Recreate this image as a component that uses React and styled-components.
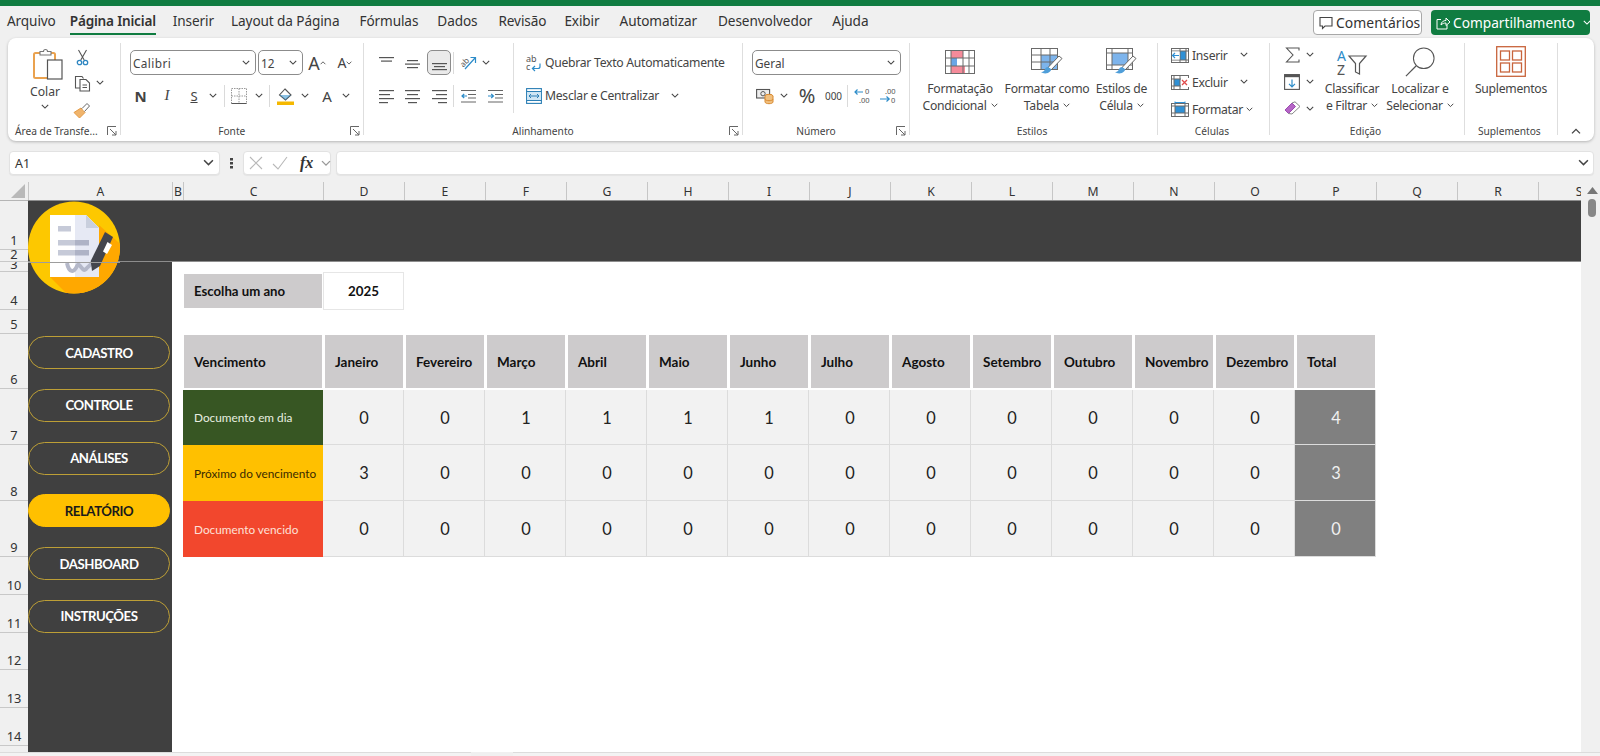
import React from "react";
import styled, { createGlobalStyle } from "styled-components";

const UI = `"Noto Sans", "Open Sans", sans-serif`;
const CELL = `Lato, "Open Sans", sans-serif`;
const COLUMNS = "144px 11px 140px repeat(13, 81px) 81px 81px 81px";

const Global = createGlobalStyle`
  html, body { margin: 0; padding: 0; background: #f0f0f0; overflow: hidden; }
  body { width: 1600px; height: 756px; font-family: ${UI}; color: #333; }
  * { box-sizing: border-box; }
  svg { overflow: visible; }
`;

const Page = styled.div`display: flex; flex-direction: column; width: 1600px; height: 756px; overflow: hidden;`;
const TitleStripe = styled.div`height: 6px; background: #107c41; flex: none;`;

const TabBar = styled.div`display: flex; align-items: stretch; height: 32px; padding: 0 10px 0 7px; flex: none;`;
const Tab = styled.div`
  display: flex; align-items: center; margin-right: ${p => p.$mr}px; padding-top: 2px; height: 29px;
  font-size: 13.6px; letter-spacing: ${p => (p.$active ? "-0.2px" : "-0.1px")}; color: #333; white-space: nowrap;
  font-weight: ${p => (p.$active ? 600 : 400)};
  border-bottom: 2px solid ${p => (p.$active ? "#107c41" : "transparent")};
`;
const TabActions = styled.div`display: flex; gap: 9px; margin-left: auto; padding-top: 4px;`;
const CommentButton = styled.div`
  display: flex; align-items: center; gap: 2px; width: 109px; height: 25px; padding-left: 5px;
  background: #fff; border: 1px solid #a8a8a8; border-radius: 4px; font-size: 13.9px; letter-spacing: .05px; color: #333;
`;
const ShareButton = styled.div`
  display: flex; align-items: center; gap: 2px; width: 159px; height: 25px; padding-left: 5px;
  background: #107c41; border-radius: 4px; font-size: 13.7px; color: #fff; white-space: nowrap;
`;
const ShareChev = styled.span`display: flex; margin-left: 6px;`;

const Ribbon = styled.div`
  display: flex; align-items: flex-start; height: 103px; width: 1586px; margin-left: 8px; padding-top: 5px; flex: none;
  background: #fff; border-radius: 8px; box-shadow: 0 1px 3px rgba(0,0,0,.25);
`;
const Group = styled.div`
  display: grid; grid-template-rows: 76px 16px; width: ${p => p.$w}px; height: 92px; flex: none;
  border-right: ${p => (p.$last ? "none" : "1px solid #dedede")};
`;
const GroupBody = styled.div`display: flex; min-width: 0;`;
const GroupFooter = styled.div`
  display: grid; grid-template-columns: 1fr auto 1fr; align-items: center; align-self: end; height: 16px; margin-bottom: -4px;
  padding: 0 3px 0 0;
  font-size: 10.2px; color: #444; white-space: nowrap;
`;
const ClipFooter = styled(GroupFooter)`grid-template-columns: auto 1fr; padding-left: 7px;`;
const FooterLabel = styled.span`grid-column: 2; padding-right: ${p => p.$shift ?? 0}px;`;
const FooterEnd = styled.span`grid-column: ${p => p.$col ?? 3}; justify-self: end; display: flex;`;

const Stack = styled.div`
  display: flex; flex-direction: column; gap: ${p => p.$gap ?? 8}px; padding: ${p => p.$pt ?? 7}px 0 0 ${p => p.$pl ?? 0}px;
  width: ${p => (p.$w ? `${p.$w}px` : "auto")}; margin-top: ${p => p.$mt ?? 0}px; flex: none;
  border-right: ${p => (p.$divided ? "1px solid #dedede" : "none")};
  height: ${p => (p.$divided ? "70px" : "auto")};
`;
const Row = styled.div`display: flex; align-items: center; height: ${p => p.$h ?? 25}px; flex: none;`;
const Slot = styled.div`
  display: flex; align-items: center; justify-content: center; width: ${p => p.$w}px; height: ${p => p.$h ?? 24}px; flex: none;
  margin-left: ${p => p.$ml ?? 0}px; color: #444; font-size: ${p => p.$size ?? 13}px;
`;
const VSep = styled.div`width: 1px; height: 22px; background: #dadada; margin: 0 ${p => p.$m ?? 1}px; flex: none;`;
const SelectBox = styled.div`
  display: flex; align-items: center; justify-content: space-between; width: ${p => p.$w}px; height: 25px; margin-left: ${p => p.$ml ?? 0}px; padding: 0 5px 0 2px;
  border: 1px solid #8c8c8c; border-radius: 5px; background: #fff; font-size: 11.8px; letter-spacing: ${p => p.$ls ?? 0}px; color: #444; flex: none;
`;
const FontLetter = styled.span`
  font-size: ${p => p.$size}px; font-weight: ${p => p.$weight ?? 400}; font-style: ${p => p.$italic ? "italic" : "normal"};
  font-family: ${p => p.$serif ? `"Liberation Serif", serif` : UI};
  text-decoration: ${p => p.$under ? "underline" : "none"}; color: #444;
`;
const ActiveAlign = styled.div`
  display: flex; align-items: center; justify-content: center; width: 24px; height: 25px; margin: 0 1px;
  background: #eaeaea; border: 1px solid #8c8c8c; border-radius: 5px; flex: none;
`;
const Label = styled.span`font-size: 12.2px; color: #444; white-space: nowrap; letter-spacing: -0.28px;`;

const PasteButton = styled.div`display: flex; flex-direction: column; align-items: center; width: 56px; margin-left: 9px; padding-top: 4px; flex: none;`;
const PasteGlyph = styled.div`display: flex; margin-left: 5px;`;
const PasteText = styled.div`font-size: 12.2px; color: #444; line-height: 16px; margin-top: 4px;`;

const BigButton = styled.div`
  display: flex; flex-direction: column; align-items: center; width: ${p => p.$w}px; margin-left: ${p => p.$ml ?? 0}px; flex: none;
`;
const BigIcon = styled.div`display: flex; align-items: center; justify-content: center; height: 37px; width: 100%;`;
const BigLine = styled.div`
  display: flex; align-items: center; justify-content: center; gap: 4px; height: 17px;
  font-size: 12.2px; color: #444; white-space: nowrap; letter-spacing: -0.28px;
`;
const CommandRow = styled.div`display: flex; align-items: center; height: 26px; margin-top: 1px; flex: none;`;
const CommandIcon = styled.div`display: flex; align-items: center; width: 21px; flex: none;`;
const CollapseSlot = styled.div`display: flex; justify-content: center; grid-row: 2; align-self: end; margin-bottom: -4px; height: 16px; align-items: center;`;

const FormulaBar = styled.div`display: flex; align-items: center; height: 24px; margin: 10px 0 7px; padding-left: 9px; flex: none;`;
const Field = styled.div`
  display: flex; align-items: center; width: ${p => p.$w}px; height: 24px; flex: none; margin-left: ${p => p.$ml ?? 0}px;
  background: #fff; border: 1px solid #e2e2e2; border-radius: 4px; box-shadow: 0 1px 1px rgba(0,0,0,.05);
  padding: ${p => p.$pad ?? "0 5px"}; justify-content: ${p => p.$justify ?? "flex-start"}; gap: ${p => p.$gap ?? 0}px; font-size: 12.4px; color: #333;
`;
const Kebab = styled.div`display: flex; justify-content: center; width: 23px; flex: none;`;
const FxMark = styled.span`font-family: "Liberation Serif", serif; font-style: italic; font-weight: 700; font-size: 16px; color: #333; margin-left: 4px;`;

const GridZone = styled.div`display: flex; height: 570px; flex: none;`;
const GridMain = styled.div`width: 1581px; flex: none; overflow: hidden;`;
const HeadRow = styled.div`display: flex; height: 19px;`;
const Corner = styled.div`display: flex; align-items: center; justify-content: flex-end; width: 28px; padding-right: 3px; flex: none; border-bottom: 1px solid #b5b5b5;`;
const ColHeads = styled.div`display: grid; grid-template-columns: ${COLUMNS}; border-bottom: 1px solid #8e8e8e; flex: 1; min-width: 0;`;
const ColHead = styled.div`
  display: flex; align-items: center; justify-content: center; height: 18px;
  font-size: 12.2px; color: #333; border-left: 1px solid #c6c6c6;
`;
const SheetBody = styled.div`display: flex; height: 551px;`;
const RowHeads = styled.div`display: flex; flex-direction: column; width: 28px; flex: none;`;
const RowHead = styled.div`
  display: flex; align-items: flex-end; justify-content: center; height: ${p => p.$h}px; flex: none; overflow: hidden;
  padding-bottom: ${p => (p.$h > 20 ? 2 : 0)}px;
  font-size: 12.8px; line-height: 14px; color: #333; border-bottom: 1px solid #c8c8c8;
`;
const Canvas = styled.div`
  position: relative; display: grid; flex: 1; min-width: 0; background: #fff;
  grid-template-columns: ${COLUMNS};
  grid-template-rows: 49px 12px 10px 38px 24px 55px 56px 56px 56px 1fr;
  font-family: ${CELL};
`;
const Band = styled.div`grid-column: 1 / -1; grid-row: 1 / 3; background: #404040; border-bottom: 1px solid #8d8d8d;`;
const LogoWrap = styled.div`position: absolute; left: 0; top: 0; width: 92px; height: 93px; z-index: 2;`;
const SideBar = styled.div`
  grid-column: 1; grid-row: 3 / -1; display: flex; flex-direction: column; gap: 19.8px; padding: 74px 2px 0 0;
  background: #404040;
`;
const Pill = styled.div`
  display: flex; align-items: center; justify-content: center; height: 33px; border-radius: 17px;
  border: 1.5px solid ${p => (p.$active ? "#ffc000" : "#bd9f36")};
  background: ${p => (p.$active ? "#ffc000" : "#404040")};
  color: ${p => (p.$active ? "#1a1a1a" : "#fff")};
  font-size: 13.2px; font-weight: 700; letter-spacing: -0.45px;
`;
const YearLabel = styled.div`
  grid-column: 3; grid-row: 4; display: flex; align-items: center; margin: 2px 1px 2px 1px; padding-left: 10px;
  background: #cdcbcc; font-weight: 700; font-size: 13.2px; color: #111;
`;
const YearValue = styled.div`
  grid-column: 4; grid-row: 4; display: flex; align-items: center; justify-content: center;
  border: 1px solid #e6e6e6; font-weight: 700; font-size: 13.4px; color: #111;
`;
const HeadCell = styled.div`
  grid-column: ${p => p.$col}; grid-row: 6;
  display: flex; align-items: center; margin: 1px 1px 1px ${p => p.$ml ?? 2}px; padding-left: 10px;
  background: #cdcbcc; font-weight: 700; font-size: 13.5px; color: #111; white-space: nowrap;
`;
const StatusCell = styled.div`
  grid-column: 3; grid-row: ${p => p.$row};
  display: flex; align-items: center; padding-left: 11px; margin-top: ${p => p.$first ? 1 : 0}px;
  background: ${p => p.$bg}; color: ${p => p.$fg}; font-size: 11.8px; white-space: nowrap;
`;
const ValueCell = styled.div`
  grid-column: ${p => p.$col}; grid-row: ${p => p.$row};
  display: flex; align-items: center; justify-content: center; padding-left: 2px; margin-top: ${p => p.$first ? 1 : 0}px;
  background: ${p => (p.$total ? "#808080" : "#f2f2f2")};
  color: ${p => (p.$total ? "#f0f0f0" : "#222")};
  border-right: 1px solid #dcdcdc; border-bottom: 1px solid #dcdcdc; font-size: 16.4px;
`;
const VScroll = styled.div`display: flex; flex-direction: column; align-items: center; gap: 5px; width: 19px; padding: 5px 0 0 3px; flex: none;`;
const Thumb = styled.div`width: 8px; height: 18px; background: #878787; border-radius: 4px;`;
const BottomStrip = styled.div`display: flex; gap: 42px; height: 4px; flex: none;`;
const BottomBar = styled.div`
  width: ${p => p.$w ? `${p.$w}px` : "auto"}; flex: ${p => p.$w ? "none" : 1};
  border-top: 1px solid #dcdcdc; background: #f3f3f3;
`;

const Chev = ({ w = 8, c = "#444", up }) => (
  <svg width={w} height={w * 0.65} viewBox="0 0 8 5" fill="none">
    <path d={up ? "M.8 4.2 4 1l3.2 3.2" : "M.8.8 4 4 7.2.8"} stroke={c} strokeWidth="1.1" />
  </svg>
);
const Launcher = () => (
  <svg width="10" height="10" viewBox="0 0 10 10" fill="none" stroke="#666">
    <path d="M9 .5H.5V9" /><path d="M3 3l6 6M9 5v4H5" />
  </svg>
);
const Lines = ({ ys, ws, w = 15, h = 16, c = "#555", anchor = "c" }) => (
  <svg width={w} height={h} viewBox={`0 0 ${w} ${h}`}>
    {ys.map((y, i) => {
      const lw = ws[i];
      const x = anchor === "l" ? 0 : anchor === "r" ? w - lw : (w - lw) / 2;
      return <rect key={i} x={x} y={y} width={lw} height="1.2" fill={c} />;
    })}
  </svg>
);
const Indent = ({ right }) => (
  <svg width="15" height="16" viewBox="0 0 15 16" fill="none">
    <path d="M0 2.500h15M7 6.500h8M7 10h8M0 14h15" stroke="#666" strokeWidth="1.1" />
    <path d={right ? "M0 8h5M3.200 6 5.400 8 3.200 10" : "M6 8H1M3.200 6 1 8l2.200 2"} stroke="#2c8cc9" strokeWidth="1.2" />
  </svg>
);
const PasteIcon = () => (
  <svg width="30" height="33" viewBox="0 0 30 33" fill="none">
    <rect x="1" y="6" width="21" height="25" rx="1.5" stroke="#eaa24f" strokeWidth="2" fill="#fff" />
    <path d="M7 6.500V4.500h3.500a2 2 0 0 1 4 0H18v3.500H7z" fill="#fff" stroke="#777" strokeWidth="1.1" />
    <rect x="14.500" y="13" width="14.500" height="19" fill="#fff" stroke="#555" strokeWidth="1.2" />
  </svg>
);
const CutIcon = () => (
  <svg width="13" height="17" viewBox="0 0 13 17" fill="none">
    <path d="M2.500 1 8.200 11M10.500 1 4.800 11" stroke="#555" strokeWidth="1.1" />
    <circle cx="3.500" cy="13.500" r="2.2" stroke="#2e86c1" strokeWidth="1.3" />
    <circle cx="9.500" cy="13.500" r="2.2" stroke="#2e86c1" strokeWidth="1.3" />
  </svg>
);
const CopyIcon = () => (
  <svg width="17" height="17" viewBox="0 0 17 17" fill="none" stroke="#555" strokeWidth="1.1">
    <path d="M6 13H1.500V1.500H8l1.500 2" />
    <path d="M6 4.500h6l3.500 3.500v8H6z" fill="#fff" />
    <path d="M8.500 10h4.500M8.500 12.500h4.500" />
  </svg>
);
const BrushIcon = () => (
  <svg width="18" height="17" viewBox="0 0 18 17" fill="none">
    <path d="M1 10.500 8 6l4 4.500L6.500 16z" fill="#f0b46c" stroke="#e49a45" />
    <path d="m9 6.500 5-5 2.500 2.500-5 5.500" fill="#fff" stroke="#666" />
  </svg>
);
const BordersIcon = () => (
  <svg width="16" height="16" viewBox="0 0 16 16" fill="none">
    <rect x=".5" y=".5" width="15" height="15" stroke="#999" strokeDasharray="1.5 1" />
    <path d="M8 .5v15M.5 8h15" stroke="#999" strokeDasharray="1.5 1" />
    <path d="M.5 15.500h15" stroke="#555" />
  </svg>
);
const FillIcon = () => (
  <svg width="17" height="18" viewBox="0 0 17 18" fill="none">
    <path d="M8 2 14 8 8.500 13 2.500 8z" stroke="#555" strokeWidth="1.1" fill="#fff" />
    <path d="M2.500 8h11.500L8.500 13z" fill="#2f8fce" opacity=".55" />
    <rect x="0" y="14.500" width="17" height="3.500" fill="#f5b800" />
  </svg>
);
const WrapIcon = () => (
  <svg width="18" height="18" viewBox="0 0 18 18" fill="none">
    <text x="1" y="8" fontFamily="Noto Sans" fontSize="9" fill="#555">ab</text>
    <text x="1" y="16" fontFamily="Noto Sans" fontSize="9" fill="#555">c</text>
    <path d="M15 9.500v3a2 2 0 0 1-2 2H7.500M10 12l-2.600 2.500L10 17" stroke="#2c8cc9" strokeWidth="1.2" />
  </svg>
);
const MergeIcon = () => (
  <svg width="16" height="16" viewBox="0 0 16 16" fill="none">
    <rect x=".6" y=".6" width="14.800" height="14.800" stroke="#2c7fb5" strokeWidth="1.1" />
    <path d="M.6 3.500h14.800M.6 12.500h14.800" stroke="#2c7fb5" />
    <rect x="1" y="4" width="14" height="8" fill="#cfe6f5" />
    <path d="M3 8h10M5 6 3 8l2 2M11 6l2 2-2 2" stroke="#2c7fb5" strokeWidth="1" />
  </svg>
);
const OrientIcon = () => (
  <svg width="17" height="17" viewBox="0 0 17 17" fill="none">
    <text x="0" y="10" fontFamily="Noto Sans" fontSize="8" fill="#555" transform="rotate(-45 6 8)">ab</text>
    <path d="M5 15 15 4M10.500 3.500H15.500V9" stroke="#2c8cc9" strokeWidth="1.2" />
  </svg>
);
const CurrencyIcon = () => (
  <svg width="18" height="16" viewBox="0 0 18 16" fill="none">
    <rect x=".6" y="1.500" width="13" height="8.500" stroke="#555" strokeWidth="1.1" fill="#eee" />
    <circle cx="7" cy="5.700" r="2.200" stroke="#555" />
    <ellipse cx="13" cy="8" rx="4" ry="1.700" fill="#f0c080" stroke="#d98a30" />
    <path d="M9 8v6c0 1 2 1.700 4 1.700s4-.7 4-1.700V8" fill="#f0c080" stroke="#d98a30" />
    <path d="M9 11c0 1 2 1.700 4 1.700s4-.7 4-1.700" stroke="#d98a30" />
  </svg>
);
const DecimalIcon = ({ more }) => (
  <svg width="18" height="17" viewBox="0 0 18 17" fill="none">
    <text x={more ? 5 : 11} y="7" fontFamily="Noto Sans" fontSize="7.5" fill="#555">{more ? ".00" : "0"}</text>
    <text x={more ? 11 : 5} y="15.500" fontFamily="Noto Sans" fontSize="7.5" fill="#555">{more ? "0" : ".00"}</text>
    <path d={more ? "M0 12h9M6.500 9.500 9.200 12l-2.700 2.500" : "M1 5h8M3.500 2.500 1 5l2.500 2.500"} stroke="#2c8cc9" strokeWidth="1.2" />
  </svg>
);
const GridBase = ({ w, h, cols, rows }) => (
  <g fill="none" stroke="#6a6a6a" strokeWidth="1">
    <rect x=".5" y=".5" width={w - 1} height={h - 1} />
    {cols.map(x => <path key={x} d={`M${x} .5V${h - .5}`} />)}
    {rows.map(y => <path key={y} d={`M.5 ${y}H${w - .5}`} />)}
  </g>
);
const CondIcon = () => (
  <svg width="30" height="24" viewBox="0 0 30 24">
    <rect x="6" y="1" width="12" height="7" fill="#f58b9a" /><rect x="6" y="8" width="6" height="8" fill="#6aa6e6" />
    <rect x="6" y="16" width="14" height="7" fill="#f58b9a" />
    <GridBase w={30} h={24} cols={[6, 18, 24]} rows={[8, 16]} />
  </svg>
);
const Brush = ({ x, y }) => (
  <g transform={`translate(${x} ${y})`}>
    <path d="M18 0 21 2.500 10 14 7 11.500z" fill="#fff" stroke="#666" />
    <path d="M7 11c-3 0-3 3-4 4-1 1-3 1-3 1 2 2 7 2 9-.5 1-1.200 1.500-2 1-2.500z" fill="#4f9ed9" />
  </g>
);
const TableIcon = () => (
  <svg width="32" height="28" viewBox="0 0 32 28">
    <rect x="10" y="7" width="17" height="15" fill="#7db4ec" />
    <GridBase w={27} h={22} cols={[10, 19]} rows={[7, 14]} />
    <Brush x={10} y={8} />
  </svg>
);
const CellStyleIcon = () => (
  <svg width="32" height="28" viewBox="0 0 32 28">
    <rect x="6" y="5" width="16" height="12" fill="#7db4ec" />
    <GridBase w={27} h={22} cols={[6, 22]} rows={[5, 17]} />
    <Brush x={9} y={8} />
  </svg>
);
const InsertIcon = () => (
  <svg width="18" height="15" viewBox="0 0 18 15" fill="none">
    <rect x="9" y="3" width="6" height="9" fill="#2f90d5" />
    <GridBase w={18} h={15} cols={[9, 15]} rows={[3, 12]} />
    <rect x="1" y="3.500" width="7.500" height="8" fill="#fff" />
    <path d="M8 7.500H1.500M4 5 1.500 7.500 4 10" stroke="#2f90d5" strokeWidth="1.2" />
  </svg>
);
const DeleteIcon = () => (
  <svg width="18" height="15" viewBox="0 0 18 15" fill="none">
    <rect x="3" y="4" width="6" height="7" fill="#2f90d5" />
    <GridBase w={18} h={15} cols={[3, 9]} rows={[4, 11]} />
    <rect x="10" y="3" width="8" height="9" fill="#fff" />
    <path d="m11 5 5 5M16 5l-5 5" stroke="#e04a4a" strokeWidth="1.3" />
  </svg>
);
const FormatIcon = () => (
  <svg width="18" height="17" viewBox="0 0 18 17" fill="none">
    <rect x="4" y="5" width="10" height="7" fill="#2f90d5" />
    <g transform="translate(0 2)"><GridBase w={18} h={14} cols={[4, 14]} rows={[3, 10]} /></g>
    <path d="M4 .5v2M14 .5v2M4 1.500h10" stroke="#2f90d5" />
  </svg>
);
const SumIcon = () => (
  <svg width="15" height="16" viewBox="0 0 15 16" fill="none">
    <path d="M14 3.500V1H1.500L8 8l-6.500 7H14v-2.500" stroke="#555" strokeWidth="1.1" />
  </svg>
);
const FillDownIcon = () => (
  <svg width="16" height="16" viewBox="0 0 16 16" fill="none">
    <rect x=".6" y=".6" width="14.800" height="14.800" stroke="#555" strokeWidth="1.1" />
    <rect x=".6" y=".6" width="14.800" height="2.600" fill="#555" />
    <path d="M8 5.500v7M5 9.800l3 3 3-3" stroke="#2c8cc9" strokeWidth="1.2" />
  </svg>
);
const EraserIcon = () => (
  <svg width="17" height="17" viewBox="0 0 17 17" fill="none">
    <path d="M1 9 8 2l3.500 3.500-7 7z" fill="#b565c6" stroke="#9c4bb0" />
    <path d="M8 2 11 .8 16 5.500 8 13 4.500 12.500" stroke="#888" />
  </svg>
);
const SortIcon = () => (
  <svg width="30" height="28" viewBox="0 0 30 28" fill="none">
    <text x="0" y="13" fontFamily="Noto Sans" fontSize="14" fill="#2c8cc9">A</text>
    <text x="0" y="27" fontFamily="Noto Sans" fontSize="14" fill="#555">Z</text>
    <path d="M12 8h17l-6.500 7.500V26l-4-2v-8.500z" stroke="#555" strokeWidth="1.2" />
  </svg>
);
const FindIcon = () => (
  <svg width="30" height="30" viewBox="0 0 32 32" fill="none">
    <circle cx="20" cy="12" r="11" stroke="#555" strokeWidth="1.1" />
    <path d="M12 20 1 31" stroke="#555" strokeWidth="1.3" />
  </svg>
);
const AddinIcon = () => (
  <svg width="30" height="31" viewBox="0 0 30 31" fill="none" stroke="#c8643c" strokeWidth="1.3">
    <rect x=".7" y=".7" width="28.600" height="29.600" />
    <rect x="4.500" y="5" width="9" height="9" /><rect x="16.500" y="5" width="9" height="9" />
    <rect x="4.500" y="17" width="9" height="9" /><rect x="16.500" y="17" width="9" height="9" />
  </svg>
);
const CommentIcon = () => (
  <svg width="15" height="14" viewBox="0 0 15 14" fill="none">
    <path d="M1 1.500h12v8.500H6L3.500 12.500V10H1z" stroke="#444" strokeWidth="1.1" />
  </svg>
);
const ShareIcon = () => (
  <svg width="15" height="14" viewBox="0 0 15 14" fill="none" stroke="#fff" strokeWidth="1">
    <path d="M5 3.500H1v9.500h10V9" /><path d="M5 9c0-3 2.500-4.500 5-4.500V2l4 4-4 3.500V7c-2 0-3.500 .5-5 2z" />
  </svg>
);
const Logo = () => (
  <svg width="92" height="93" viewBox="0 0 92 93">
    <defs><clipPath id="disc"><circle cx="46" cy="46.500" r="46" /></clipPath></defs>
    <circle cx="46" cy="46.500" r="46" fill="#fdc800" />
    <g clipPath="url(#disc)">
      <polygon points="71,24 100,50 100,100 46,100 22,76 71,76" fill="#ffa800" />
      <polygon points="22,14 58,14 71,27 71,76 22,76" fill="#fff" />
      <polygon points="47,14 58,14 71,27 71,76 47,76" fill="#e6e9f4" />
      <polygon points="58,14 71,27 58,27" fill="#c9cfdd" />
      <rect x="30" y="25" width="13" height="5.500" fill="#c6cad8" />
      <rect x="30" y="39" width="17" height="5.500" fill="#c6cad8" /><rect x="47" y="39" width="14" height="5.500" fill="#aeb3c6" />
      <rect x="30" y="49" width="17" height="5.500" fill="#c6cad8" /><rect x="47" y="49" width="14" height="5.500" fill="#aeb3c6" />
      <path d="M39 62c2 10 7 10 10 3 3-5 5 7 9 3 2-2 4-5 8-6" fill="none" stroke="#b4b8c9" strokeWidth="4" />
      <polygon points="64,70 62.700,60 77,31 85,36 72,65" fill="#43454d" />
      <polygon points="79.500,41 84,44 79,53 75,50.500" fill="#fff" />
    </g>
    <path d="M0 61.500h92" stroke="#9d9d9d" strokeWidth="1" />
  </svg>
);

const TABS = [["Arquivo", 14], ["Página Inicial", 17, true], ["Inserir", 17], ["Layout da Página", 20], ["Fórmulas", 19], ["Dados", 21], ["Revisão", 18], ["Exibir", 20], ["Automatizar", 21], ["Desenvolvedor", 20], ["Ajuda", 0]];
const COLS = "A B C D E F G H I J K L M N O P Q R S".split(" ");
const ROWS = [[1, 49], [2, 12], [3, 10], [4, 38], [5, 24], [6, 55], [7, 56], [8, 56], [9, 56], [10, 38], [11, 38], [12, 37], [13, 38], [14, 38], ["", 7]];
const PILLS = ["CADASTRO", "CONTROLE", "ANÁLISES", "RELATÓRIO", "DASHBOARD", "INSTRUÇÕES"];
const MONTHS = ["Janeiro", "Fevereiro", "Março", "Abril", "Maio", "Junho", "Julho", "Agosto", "Setembro", "Outubro", "Novembro", "Dezembro", "Total"];
const DATA = [
  { name: "Documento em dia", bg: "#375623", fg: "#e8efe0", vals: [0, 0, 1, 1, 1, 1, 0, 0, 0, 0, 0, 0, 4] },
  { name: "Próximo do vencimento", bg: "#ffc000", fg: "#3a2a00", vals: [3, 0, 0, 0, 0, 0, 0, 0, 0, 0, 0, 0, 3] },
  { name: "Documento vencido", bg: "#f2472d", fg: "#fde0d8", vals: [0, 0, 0, 0, 0, 0, 0, 0, 0, 0, 0, 0, 0] },
];

const Footer = ({ label, launcher }) => (
  <GroupFooter>
    <FooterLabel $shift={launcher ? 17 : 0}>{label}</FooterLabel>
    {launcher && <FooterEnd><Launcher /></FooterEnd>}
  </GroupFooter>
);

const RibbonBar = () => (
  <Ribbon>
    <Group $w={112.5}>
      <GroupBody>
        <PasteButton>
          <PasteGlyph><PasteIcon /></PasteGlyph>
          <PasteText>Colar</PasteText>
          <Slot $w={14} $h={14}><Chev /></Slot>
        </PasteButton>
        <Stack $pt={2} $gap={1}>
          <Row $h={24}><Slot $w={18}><CutIcon /></Slot></Row>
          <Row $h={26}><Slot $w={18}><CopyIcon /></Slot><Slot $w={18}><Chev /></Slot></Row>
          <Row $h={26}><Slot $w={18}><BrushIcon /></Slot></Row>
        </Stack>
      </GroupBody>
      <ClipFooter>
        <span>Área de Transfe...</span><FooterEnd $col={2}><Launcher /></FooterEnd>
      </ClipFooter>
    </Group>

    <Group $w={243.5}>
      <Stack $pl={9.5}>
        <Row>
          <SelectBox $w={126} $ls={0.4}>Calibri<Chev /></SelectBox>
          <SelectBox $w={45} $ml={2}>12<Chev /></SelectBox>
          <Slot $w={28} $size={18}>A<Chev w={6} up /></Slot>
          <Slot $w={28} $size={14}>A<Chev w={6} /></Slot>
        </Row>
        <Row>
          <Slot $w={21}><FontLetter $size={15} $weight={700}>N</FontLetter></Slot>
          <Slot $w={32}><FontLetter $size={15} $italic $serif>I</FontLetter></Slot>
          <Slot $w={22}><FontLetter $size={13} $under>S</FontLetter></Slot>
          <Slot $w={16}><Chev /></Slot>
          <VSep $m={3} />
          <Slot $w={22}><BordersIcon /></Slot>
          <Slot $w={18}><Chev /></Slot>
          <VSep $m={1} />
          <Slot $w={28}><FillIcon /></Slot>
          <Slot $w={12}><Chev /></Slot>
          <Slot $w={32}><FontLetter $size={15}>A</FontLetter></Slot>
          <Slot $w={6}><Chev /></Slot>
        </Row>
      </Stack>
      <Footer label="Fonte" launcher />
    </Group>

    <Group $w={379}>
      <GroupBody>
        <Stack $w={150} $pl={10} $divided>
          <Row>
            <Slot $w={24}><Lines ys={[2, 5.500]} ws={[15, 11]} /></Slot>
            <Slot $w={28}><Lines ys={[5, 8.500, 12]} ws={[11, 15, 11]} /></Slot>
            <ActiveAlign><Lines ys={[8, 11, 14]} ws={[15, 11, 15]} /></ActiveAlign>
            <VSep $m={1} />
            <Slot $w={26}><OrientIcon /></Slot>
            <Slot $w={9}><Chev /></Slot>
          </Row>
          <Row>
            <Slot $w={24}><Lines ys={[2, 6, 10, 14]} ws={[15, 11, 15, 9]} anchor="l" /></Slot>
            <Slot $w={28}><Lines ys={[2, 6, 10, 14]} ws={[15, 11, 15, 9]} /></Slot>
            <Slot $w={26}><Lines ys={[2, 6, 10, 14]} ws={[15, 11, 15, 9]} anchor="r" /></Slot>
            <VSep $m={1} />
            <Slot $w={26}><Indent /></Slot>
            <Slot $w={28}><Indent right /></Slot>
          </Row>
        </Stack>
        <Stack $pl={9}>
          <Row><Slot $w={22}><WrapIcon /></Slot><Label>Quebrar Texto Automaticamente</Label></Row>
          <Row><Slot $w={22}><MergeIcon /></Slot><Label>Mesclar e Centralizar</Label><Slot $w={14} $ml={9}><Chev /></Slot></Row>
        </Stack>
      </GroupBody>
      <Footer label="Alinhamento" launcher />
    </Group>

    <Group $w={167}>
      <Stack $pl={9}>
        <Row><SelectBox $w={149}>Geral<Chev /></SelectBox></Row>
        <Row>
          <Slot $w={25}><CurrencyIcon /></Slot>
          <Slot $w={14}><Chev /></Slot>
          <Slot $w={32} $size={20}>%</Slot>
          <Slot $w={21} $size={10}>000</Slot>
          <VSep $m={3} />
          <Slot $w={24}><DecimalIcon /></Slot>
          <Slot $w={28}><DecimalIcon more /></Slot>
        </Row>
      </Stack>
      <Footer label="Número" launcher />
    </Group>

    <Group $w={248}>
      <GroupBody>
        <BigButton $w={88} $ml={6}>
          <BigIcon><CondIcon /></BigIcon>
          <BigLine>Formatação</BigLine><BigLine>Condicional <Chev w={7} /></BigLine>
        </BigButton>
        <BigButton $w={86}>
          <BigIcon><TableIcon /></BigIcon>
          <BigLine>Formatar como</BigLine><BigLine>Tabela <Chev w={7} /></BigLine>
        </BigButton>
        <BigButton $w={63}>
          <BigIcon><CellStyleIcon /></BigIcon>
          <BigLine>Estilos de</BigLine><BigLine>Célula <Chev w={7} /></BigLine>
        </BigButton>
      </GroupBody>
      <Footer label="Estilos" />
    </Group>

    <Group $w={112}>
      <Stack $pt={0} $pl={13} $gap={0} $mt={-2}>
        <CommandRow><CommandIcon><InsertIcon /></CommandIcon><Label>Inserir</Label><Slot $w={14} $ml={9}><Chev /></Slot></CommandRow>
        <CommandRow><CommandIcon><DeleteIcon /></CommandIcon><Label>Excluir</Label><Slot $w={14} $ml={9}><Chev /></Slot></CommandRow>
        <CommandRow><CommandIcon><FormatIcon /></CommandIcon><Label>Formatar</Label><Slot $w={12}><Chev w={7} /></Slot></CommandRow>
      </Stack>
      <Footer label="Células" />
    </Group>

    <Group $w={195}>
      <GroupBody>
        <Stack $pt={0} $pl={13} $gap={0} $mt={-2} $w={47}>
          <CommandRow><Slot $w={18}><SumIcon /></Slot><Slot $w={18}><Chev /></Slot></CommandRow>
          <CommandRow><Slot $w={18}><FillDownIcon /></Slot><Slot $w={18}><Chev /></Slot></CommandRow>
          <CommandRow><Slot $w={18}><EraserIcon /></Slot><Slot $w={18}><Chev /></Slot></CommandRow>
        </Stack>
        <BigButton $w={70}>
          <BigIcon><SortIcon /></BigIcon>
          <BigLine>Classificar</BigLine><BigLine>e Filtrar <Chev w={7} /></BigLine>
        </BigButton>
        <BigButton $w={66}>
          <BigIcon><FindIcon /></BigIcon>
          <BigLine>Localizar e</BigLine><BigLine>Selecionar <Chev w={7} /></BigLine>
        </BigButton>
      </GroupBody>
      <Footer label="Edição" />
    </Group>

    <Group $w={92.6}>
      <GroupBody>
        <BigButton $w={92}>
          <BigIcon><AddinIcon /></BigIcon>
          <BigLine>Suplementos</BigLine>
        </BigButton>
      </GroupBody>
      <Footer label="Suplementos" />
    </Group>

    <Group $w={36} $last>
      <CollapseSlot><Chev w={10} up /></CollapseSlot>
    </Group>
  </Ribbon>
);

const Formula = () => (
  <FormulaBar>
    <Field $w={211} $justify="space-between">A1<Chev w={11} /></Field>
    <Kebab>
      <svg width="3" height="11" viewBox="0 0 3 11" fill="#444"><rect width="3" height="2.500" /><rect y="4" width="3" height="2.500" /><rect y="8" width="3" height="2.500" /></svg>
    </Kebab>
    <Field $w={88} $gap={8} $pad="0 3px 0 5px">
      <svg width="15" height="14" viewBox="0 0 15 14" fill="none" stroke="#b8b8b8" strokeWidth="1.100"><path d="m1 1 12 12M13 1 1 13" /></svg>
      <svg width="16" height="14" viewBox="0 0 16 14" fill="none" stroke="#b8b8b8" strokeWidth="1.100"><path d="m1 8 5 5L15 1" /></svg>
      <FxMark>fx</FxMark>
      <Chev w={10} c="#999" />
    </Field>
    <Field $w={1258} $ml={5} $justify="flex-end" $pad="0 4px"><Chev w={11} /></Field>
  </FormulaBar>
);

const Grid = () => (
  <GridZone>
    <GridMain>
      <HeadRow>
        <Corner>
          <svg width="14" height="14" viewBox="0 0 14 14"><polygon points="14,0 14,14 0,14" fill="#b9b9b9" /></svg>
        </Corner>
        <ColHeads>{COLS.map(c => <ColHead key={c}>{c}</ColHead>)}</ColHeads>
      </HeadRow>
      <SheetBody>
        <RowHeads>{ROWS.map(([n, h]) => <RowHead key={h + String(n)} $h={h}>{n}</RowHead>)}</RowHeads>
        <Canvas>
          <Band />
          <LogoWrap><Logo /></LogoWrap>
          <SideBar>{PILLS.map(p => <Pill key={p} $active={p === "RELATÓRIO"}>{p}</Pill>)}</SideBar>
          <YearLabel>Escolha um ano</YearLabel>
          <YearValue>2025</YearValue>
          <HeadCell $col={3} $ml={1}>Vencimento</HeadCell>
          {MONTHS.map((m, i) => (
            <HeadCell key={m} $col={4 + i}>{m}</HeadCell>
          ))}
          {DATA.map((d, r) => (
            <React.Fragment key={d.name}>
              <StatusCell $row={7 + r} $bg={d.bg} $fg={d.fg} $first={r === 0}>{d.name}</StatusCell>
              {d.vals.map((v, i) => (
                <ValueCell key={i} $col={4 + i} $row={7 + r} $total={i === 12} $first={r === 0}>{v}</ValueCell>
              ))}
            </React.Fragment>
          ))}
        </Canvas>
      </SheetBody>
    </GridMain>
    <VScroll>
      <svg width="11" height="7" viewBox="0 0 11 7"><polygon points="5.500,0 11,7 0,7" fill="#777" /></svg>
      <Thumb />
    </VScroll>
  </GridZone>
);

export default function App() {
  return (
    <Page>
      <Global />
      <TitleStripe />
      <TabBar>
        {TABS.map(([t, mr, a]) => <Tab key={t} $mr={mr} $active={a}>{t}</Tab>)}
        <TabActions>
          <CommentButton><CommentIcon />Comentários</CommentButton>
          <ShareButton><ShareIcon />Compartilhamento<ShareChev><Chev c="#fff" /></ShareChev></ShareButton>
        </TabActions>
      </TabBar>
      <RibbonBar />
      <Formula />
      <Grid />
      <BottomStrip><BottomBar $w={471} /><BottomBar /></BottomStrip>
    </Page>
  );
}
